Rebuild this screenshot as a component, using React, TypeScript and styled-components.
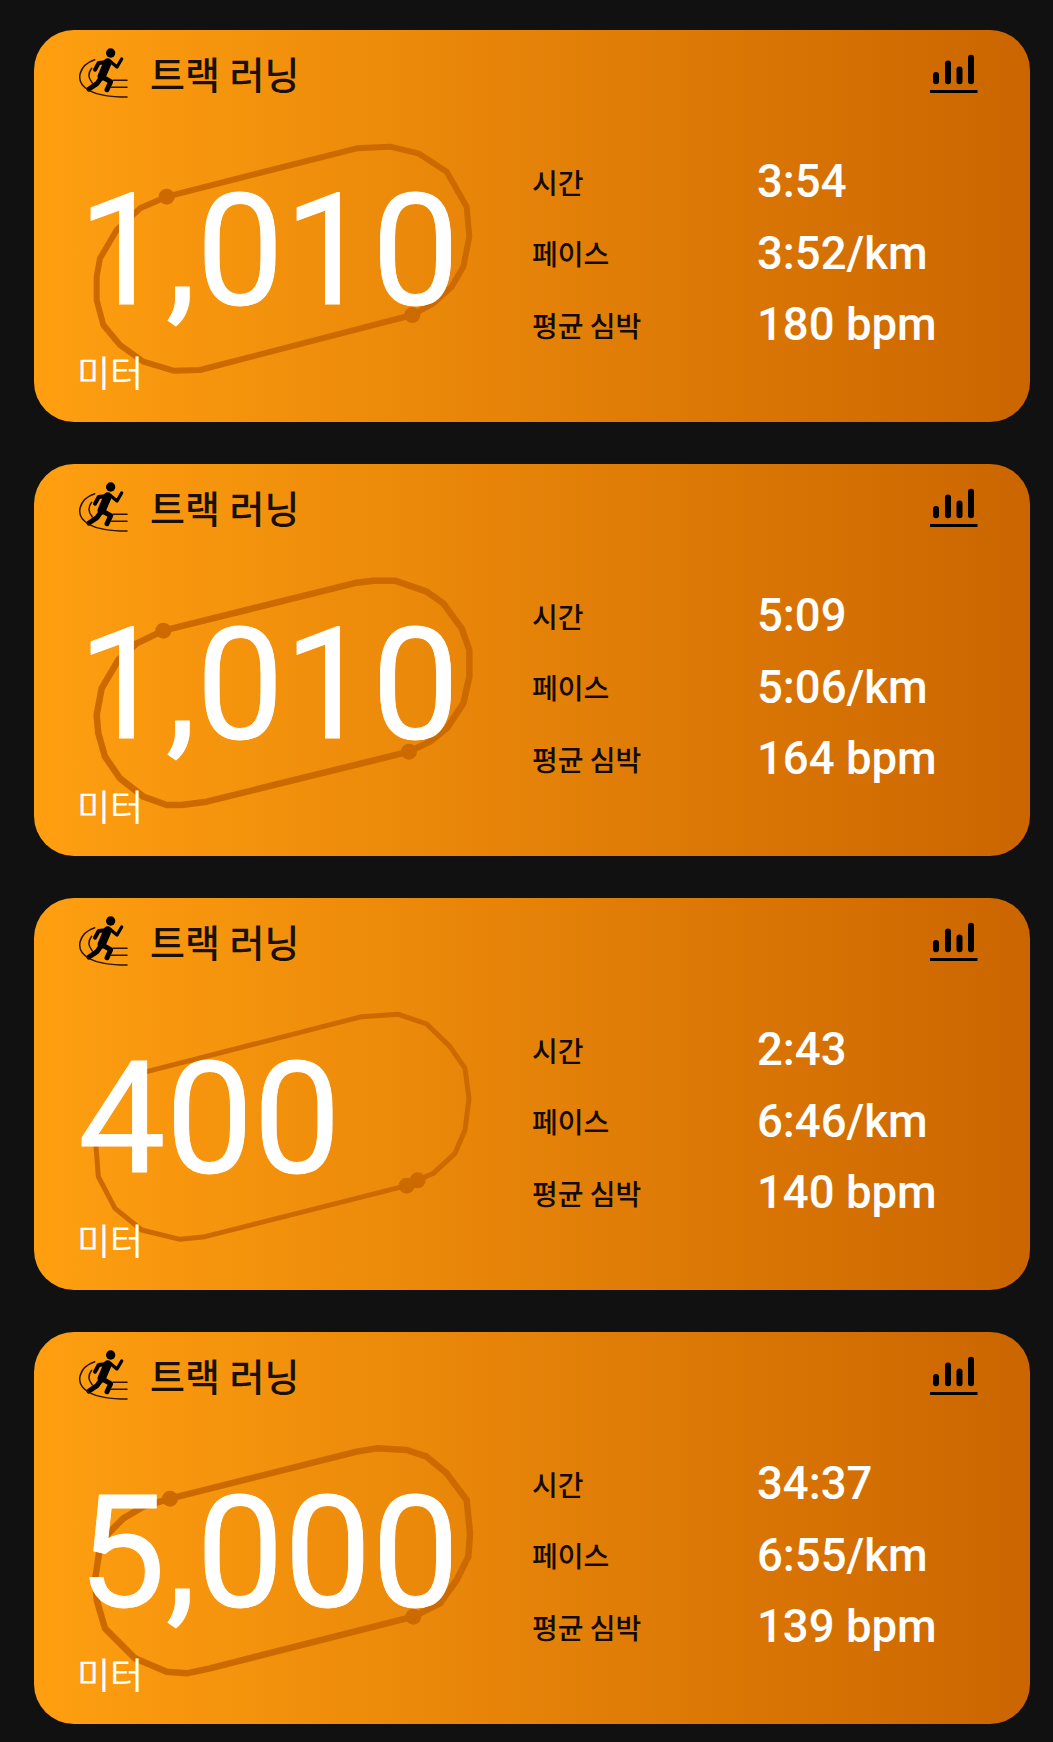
import React from "react";
import styled, { createGlobalStyle } from "styled-components";

const Global = createGlobalStyle`
  html, body { margin: 0; padding: 0; background: #111112; }
  body { font-family: "Roboto", "Noto Sans CJK KR", sans-serif; }
`;

const Page = styled.div`
  width: 1053px;
  height: 1742px;
  box-sizing: border-box;
  padding: 30px 23px 0 34px;
  display: flex;
  flex-direction: column;
  gap: 42px;
  background: #111112;
`;

const Card = styled.section`
  position: relative;
  height: 392px;
  border-radius: 40px;
  overflow: hidden;
  background: linear-gradient(90deg, #ff9f10 0%, #cb6500 100%);
  box-sizing: border-box;
  padding: 16px 52px 0 44px;
  display: flex;
  flex-direction: column;
`;

const Header = styled.header`
  display: flex;
  align-items: flex-start;
  justify-content: space-between;
  height: 60px;
`;

const Title = styled.div`
  display: flex;
  align-items: center;
  gap: 22px;
  padding-top: 2px;
`;

const TitleText = styled.span`
  font-family: "Noto Sans CJK KR", sans-serif;
  font-size: 38px;
  font-weight: 500;
  word-spacing: 1px;
  line-height: 50px;
  color: #1a1003;
`;

const BarsSlot = styled.div`
  margin-top: 6px;
  display: flex;
`;

const Body = styled.div`
  position: relative;
  flex: 1;
  display: flex;
`;

const Track = styled.svg`
  position: absolute;
  left: -44px;
  top: -76px;
  width: 996px;
  height: 392px;
`;

const Distance = styled.div`
  position: relative;
  width: 454px;
  flex: none;
  display: flex;
  flex-direction: column;
`;

const Amount = styled.div`
  font-family: "Roboto", sans-serif;
  font-size: 156px;
  line-height: 184px;
  color: #fff;
  -webkit-text-stroke: 0.8px #fff;
  margin-top: 53px;
`;

const Unit = styled.div`
  font-family: "Noto Sans CJK KR", sans-serif;
  font-size: 36px;
  line-height: 44px;
  color: #fff;
  margin-top: 6px;
  margin-left: -1px;
`;

const Stats = styled.dl`
  position: relative;
  margin: 40px 0 0;
  display: grid;
  grid-template-columns: 225px auto;
  grid-auto-rows: 71.5px;
  align-items: center;
`;

const Label = styled.dt`
  font-family: "Noto Sans CJK KR", sans-serif;
  font-size: 28px;
  font-weight: 500;
  color: #140b02;
`;

const Value = styled.dd`
  margin: 0;
  font-family: "Roboto", sans-serif;
  font-weight: 500;
  font-size: 45.5px;
  color: #fff;
`;

const RunnerIcon = () => (
  <svg width="50" height="50" viewBox="145 85 150 150" fill="none" stroke="#000" strokeLinecap="round" strokeLinejoin="round">
    <circle cx="243" cy="100" r="14" fill="#000" stroke="none" />
    <path d="M240 126 L207 130 L196 150" strokeWidth="12" />
    <path d="M243 126 L262 142 L276 118" strokeWidth="10" />
    <path d="M234 128 L216 170" strokeWidth="25" />
    <path d="M216 172 L202 192 L178 208" strokeWidth="15" />
    <path d="M218 172 L243 186 L232 210" strokeWidth="15" />
    <path d="M250 182 H292 M246 203 H292" strokeWidth="4.5" stroke="#2a1600" />
    <path d="M195 120 C150 135 130 185 178 212 C210 230 250 232 292 232" strokeWidth="4.5" stroke="#2a1600" />
    <path d="M186 146 C175 160 176 176 188 190" strokeWidth="4.5" stroke="#2a1600" />
  </svg>
);

const BarsIcon = () => (
  <svg width="48" height="41" viewBox="0 0 48 41" fill="none">
    <g stroke="#000" strokeWidth="6" strokeLinecap="round">
      <path d="M6 29.3 V23" />
      <path d="M18 29.3 V11.5" />
      <path d="M29.5 29.3 V17.5" />
      <path d="M41 29.3 V5.8" />
    </g>
    <path d="M0 39.5 H47.5" stroke="#000" strokeWidth="3" />
  </svg>
);

type Pt = [number, number];

// Converts reference measurements (crop coordinates, 3x) into card coordinates.
const crop = (ox: number, oy: number, pts: Pt[]): Pt[] =>
  pts.map(([x, y]) => [ox + x / 3, oy + y / 3]);

interface Run {
  amount: string;
  time: string;
  pace: string;
  bpm: string;
  stroke: number;
  dots: Pt[];
  path: Pt[];
}

const runs: Run[] = [
  {
    amount: "1,010",
    time: "3:54",
    pace: "3:52/km",
    bpm: "180 bpm",
    stroke: 6,
    dots: crop(-4, -10, [[410, 530], [1147, 885]]),
    path: crop(-4, -10, [
      [410, 530], [980, 385], [1080, 380], [1165, 400], [1250, 455], [1310, 560], [1318, 650], [1300, 740],
      [1265, 800], [1210, 850], [1147, 885], [510, 1050], [430, 1052], [340, 1025], [270, 975], [220, 915],
      [200, 840], [200, 770], [210, 715], [260, 630], [330, 565], [410, 530],
    ]),
  },
  {
    amount: "1,010",
    time: "5:09",
    pace: "5:06/km",
    bpm: "164 bpm",
    stroke: 6.5,
    dots: crop(26, 96, [[310, 212], [1047, 575]]),
    path: crop(26, 96, [
      [310, 212], [890, 68], [940, 62], [1005, 62], [1100, 95], [1150, 130], [1205, 205], [1228, 270], [1228, 350],
      [1210, 430], [1160, 505], [1110, 545], [1047, 575], [440, 725], [365, 735], [320, 735], [250, 710], [180, 655],
      [135, 590], [115, 520], [110, 465], [125, 385], [175, 300], [230, 250], [310, 212],
    ]),
  },
  {
    amount: "400",
    time: "2:43",
    pace: "6:46/km",
    bpm: "140 bpm",
    stroke: 5,
    dots: crop(26, 102, [[1040, 557], [1073, 541]]),
    path: crop(26, 102, [
      [1040, 557], [435, 710], [360, 718], [245, 690], [165, 625], [115, 530], [108, 440], [115, 350], [160, 280],
      [200, 250], [260, 215], [905, 50], [1015, 43], [1100, 72], [1170, 140], [1215, 205], [1227, 295], [1215, 390],
      [1185, 460], [1120, 520], [1073, 541],
    ]),
  },
  {
    amount: "5,000",
    time: "34:37",
    pace: "6:55/km",
    bpm: "139 bpm",
    stroke: 6.5,
    dots: crop(26, 88, [[330, 236], [1060, 590]]),
    path: crop(26, 88, [
      [330, 236], [890, 95], [950, 85], [1040, 90], [1100, 110], [1160, 160], [1220, 240], [1230, 340], [1225, 410],
      [1190, 480], [1140, 550], [1060, 590], [450, 745], [380, 760], [320, 755], [225, 715], [135, 625], [110, 540],
      [105, 480], [120, 380], [145, 340], [190, 295], [250, 260], [330, 236],
    ]),
  },
];

export default function App() {
  return (
    <>
      <Global />
      <Page>
        {runs.map((r, i) => (
          <Card key={i}>
            <Header>
              <Title>
                <RunnerIcon />
                <TitleText>트랙 러닝</TitleText>
              </Title>
              <BarsSlot>
                <BarsIcon />
              </BarsSlot>
            </Header>
            <Body>
              <Track viewBox="0 0 996 392" fill="none">
                <polyline
                  points={r.path.map((p) => p.join(",")).join(" ")}
                  stroke="#cc6a00"
                  strokeWidth={r.stroke}
                  strokeLinejoin="round"
                />
                {r.dots.map(([x, y], d) => (
                  <circle key={d} cx={x} cy={y} r="8" fill="#cc6a00" />
                ))}
              </Track>
              <Distance>
                <Amount>{r.amount}</Amount>
                <Unit>미터</Unit>
              </Distance>
              <Stats>
                <Label>시간</Label>
                <Value>{r.time}</Value>
                <Label>페이스</Label>
                <Value>{r.pace}</Value>
                <Label>평균 심박</Label>
                <Value>{r.bpm}</Value>
              </Stats>
            </Body>
          </Card>
        ))}
      </Page>
    </>
  );
}
